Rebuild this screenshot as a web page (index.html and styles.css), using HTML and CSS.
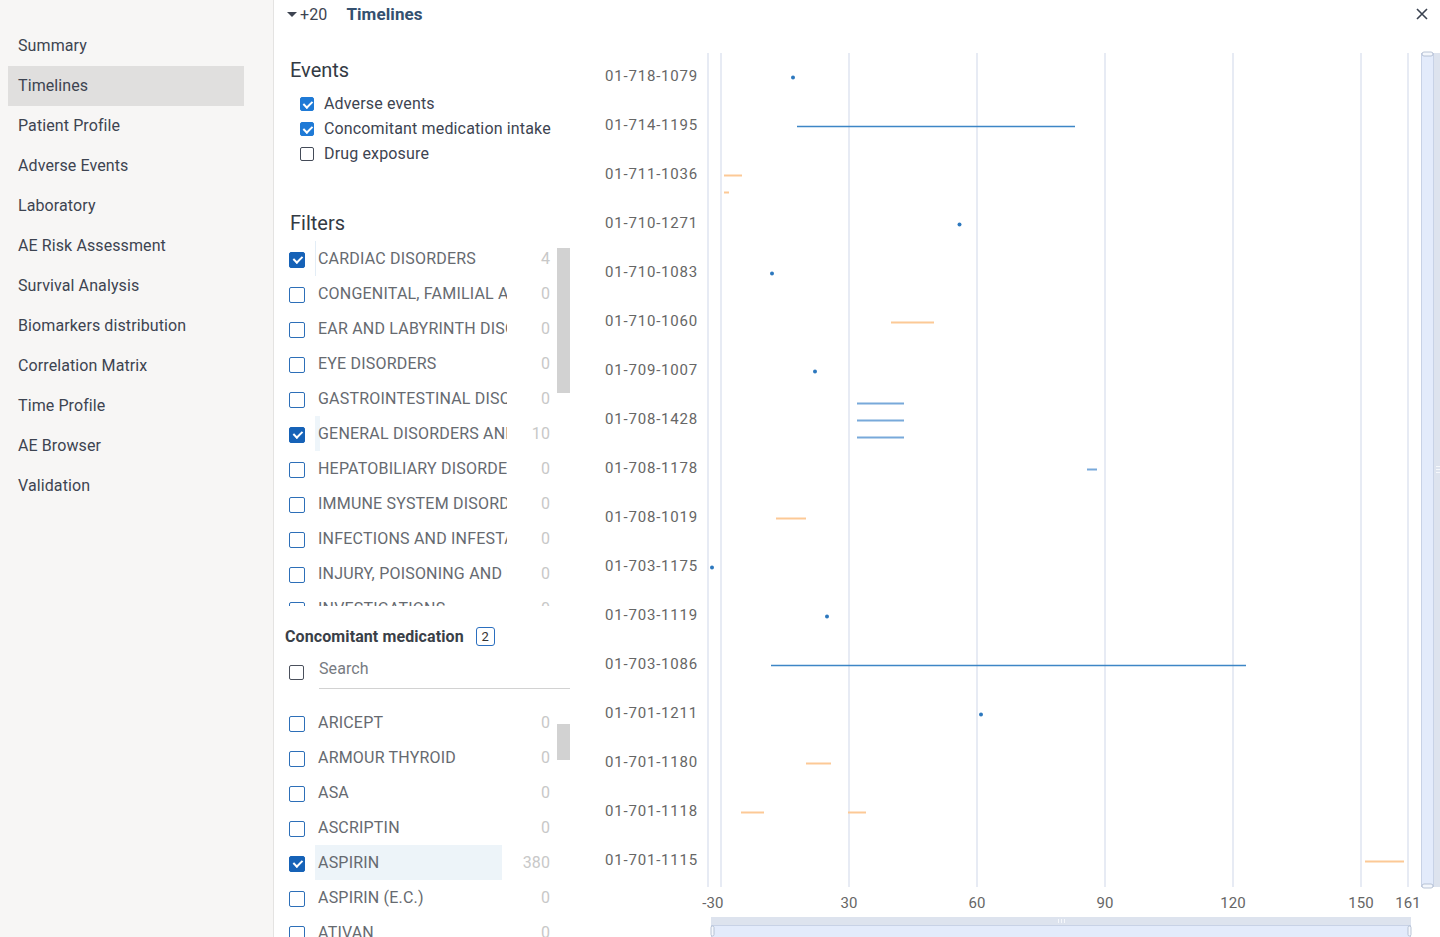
FILE: index.html
```html
<!DOCTYPE html>
<html lang="en">
<head>
<meta charset="utf-8">
<title>Timelines</title>
<link rel="stylesheet" href="styles.css">
</head>
<body>
<aside class="sidebar">
  <ul class="nav">
    <li class="nav-item">Summary</li>
    <li class="nav-item active">Timelines</li>
    <li class="nav-item">Patient Profile</li>
    <li class="nav-item">Adverse Events</li>
    <li class="nav-item">Laboratory</li>
    <li class="nav-item">AE Risk Assessment</li>
    <li class="nav-item">Survival Analysis</li>
    <li class="nav-item">Biomarkers distribution</li>
    <li class="nav-item">Correlation Matrix</li>
    <li class="nav-item">Time Profile</li>
    <li class="nav-item">AE Browser</li>
    <li class="nav-item">Validation</li>
  </ul>
</aside>
<main class="main">
  <header class="topbar">
    <span class="caret"></span>
    <span class="count">+20</span>
    <span class="title">Timelines</span>
    <svg class="close" width="12" height="12" viewBox="0 0 12 12"><path d="M1 1L11 11M11 1L1 11" stroke="#3a4250" stroke-width="1.6"/></svg>
  </header>
  <div class="body">
    <section class="panel">
      <h2 class="section-title events-title">Events</h2>
      <ul class="events">
        <li class="ev"><span class="cb cb-on"></span>Adverse events</li>
        <li class="ev"><span class="cb cb-on"></span>Concomitant medication intake</li>
        <li class="ev"><span class="cb"></span>Drug exposure</li>
      </ul>
      <h2 class="section-title filters-title">Filters</h2>
      <div class="list filter-list">
        <div class="row"><span class="box on"></span><span class="lbl mark">CARDIAC DISORDERS</span><span class="num">4</span></div>
        <div class="row"><span class="box"></span><span class="lbl">CONGENITAL, FAMILIAL AND GENETIC DISORDERS</span><span class="num">0</span></div>
        <div class="row"><span class="box"></span><span class="lbl">EAR AND LABYRINTH DISORDERS</span><span class="num">0</span></div>
        <div class="row"><span class="box"></span><span class="lbl">EYE DISORDERS</span><span class="num">0</span></div>
        <div class="row"><span class="box"></span><span class="lbl">GASTROINTESTINAL DISORDERS</span><span class="num">0</span></div>
        <div class="row"><span class="box on"></span><span class="lbl mark2">GENERAL DISORDERS AND ADMINISTRATION</span><span class="num">10</span></div>
        <div class="row"><span class="box"></span><span class="lbl">HEPATOBILIARY DISORDERS</span><span class="num">0</span></div>
        <div class="row"><span class="box"></span><span class="lbl">IMMUNE SYSTEM DISORDERS</span><span class="num">0</span></div>
        <div class="row"><span class="box"></span><span class="lbl">INFECTIONS AND INFESTATIONS</span><span class="num">0</span></div>
        <div class="row"><span class="box"></span><span class="lbl">INJURY, POISONING AND PROCEDURAL</span><span class="num">0</span></div>
        <div class="row"><span class="box"></span><span class="lbl">INVESTIGATIONS</span><span class="num">0</span></div>
        <span class="thumb thumb-filters"></span>
      </div>
      <div class="cm-head">
        <span class="cm-title">Concomitant medication</span>
        <span class="badge">2</span>
      </div>
      <div class="search-row">
        <span class="box gray"></span>
        <span class="search">Search</span>
      </div>
      <div class="list med-list">
        <div class="row"><span class="box"></span><span class="lbl">ARICEPT</span><span class="num">0</span></div>
        <div class="row"><span class="box"></span><span class="lbl">ARMOUR THYROID</span><span class="num">0</span></div>
        <div class="row"><span class="box"></span><span class="lbl">ASA</span><span class="num">0</span></div>
        <div class="row"><span class="box"></span><span class="lbl">ASCRIPTIN</span><span class="num">0</span></div>
        <div class="row"><span class="box on"></span><span class="lbl hl">ASPIRIN</span><span class="num">380</span></div>
        <div class="row"><span class="box"></span><span class="lbl">ASPIRIN (E.C.)</span><span class="num">0</span></div>
        <div class="row"><span class="box"></span><span class="lbl">ATIVAN</span><span class="num">0</span></div>
        <span class="thumb thumb-meds"></span>
      </div>
    </section>
    <section class="chart">
      <svg class="plot" width="850" height="909" viewBox="590 28 850 909">
        <g class="grid" stroke="#e7ebf4" stroke-width="2">
          <line x1="708" y1="53" x2="708" y2="887"/>
          <line x1="721" y1="53" x2="721" y2="887"/>
          <line x1="849" y1="53" x2="849" y2="887"/>
          <line x1="977" y1="53" x2="977" y2="887"/>
          <line x1="1105" y1="53" x2="1105" y2="887"/>
          <line x1="1233" y1="53" x2="1233" y2="887"/>
          <line x1="1361" y1="53" x2="1361" y2="887"/>
          <line x1="1408" y1="53" x2="1408" y2="887"/>
        </g>
        <g class="ylabels" font-family="Roboto, sans-serif" font-size="15" fill="#666" text-anchor="end" letter-spacing="0.8">
          <text x="698" y="81">01-718-1079</text>
          <text x="698" y="130">01-714-1195</text>
          <text x="698" y="179">01-711-1036</text>
          <text x="698" y="228">01-710-1271</text>
          <text x="698" y="277">01-710-1083</text>
          <text x="698" y="326">01-710-1060</text>
          <text x="698" y="375">01-709-1007</text>
          <text x="698" y="424">01-708-1428</text>
          <text x="698" y="473">01-708-1178</text>
          <text x="698" y="522">01-708-1019</text>
          <text x="698" y="571">01-703-1175</text>
          <text x="698" y="620">01-703-1119</text>
          <text x="698" y="669">01-703-1086</text>
          <text x="698" y="718">01-701-1211</text>
          <text x="698" y="767">01-701-1180</text>
          <text x="698" y="816">01-701-1118</text>
          <text x="698" y="865">01-701-1115</text>
        </g>
        <g class="xlabels" font-family="Roboto, sans-serif" font-size="15" fill="#666" text-anchor="middle">
          <text x="713" y="908">-30</text>
          <text x="849" y="908">30</text>
          <text x="977" y="908">60</text>
          <text x="1105" y="908">90</text>
          <text x="1233" y="908">120</text>
          <text x="1361" y="908">150</text>
          <text x="1408" y="908">161</text>
        </g>
        <g class="blue" stroke="#3d86c6" stroke-width="1.6">
          <line x1="797" y1="126.5" x2="1075" y2="126.5"/>
          <line x1="771" y1="665.5" x2="1246" y2="665.5"/>
        </g>
        <g stroke="#78a9da" stroke-width="2">
          <line x1="857" y1="403.5" x2="904" y2="403.5"/>
          <line x1="857" y1="420.5" x2="904" y2="420.5"/>
          <line x1="857" y1="437.5" x2="904" y2="437.5"/>
          <line x1="1087" y1="469.5" x2="1097" y2="469.5"/>
        </g>
        <g fill="#2d78be">
          <circle cx="793" cy="77.5" r="2"/>
          <circle cx="959.5" cy="224.5" r="2"/>
          <circle cx="772" cy="273.5" r="2"/>
          <circle cx="815" cy="371.5" r="2"/>
          <circle cx="712" cy="567.5" r="2"/>
          <circle cx="827" cy="616.5" r="2"/>
          <circle cx="981" cy="714.5" r="2"/>
        </g>
        <g stroke="#fcc996" stroke-width="2">
          <line x1="724" y1="175.5" x2="742" y2="175.5"/>
          <line x1="724" y1="192.5" x2="729" y2="192.5"/>
          <line x1="891" y1="322.5" x2="934" y2="322.5"/>
          <line x1="776" y1="518.5" x2="806" y2="518.5"/>
          <line x1="806" y1="763.5" x2="831" y2="763.5"/>
          <line x1="741" y1="812.5" x2="764" y2="812.5"/>
          <line x1="848" y1="812.5" x2="866" y2="812.5"/>
          <line x1="1365" y1="861.5" x2="1404" y2="861.5"/>
        </g>
        <g class="vzoom">
          <rect x="1421.5" y="53.5" width="12" height="833" fill="#e3ebfb" stroke="#c8d2e6"/>
          <rect x="1434" y="53" width="6" height="834" fill="#dde3ee"/>
          <rect x="1422" y="52" width="11" height="4" rx="2" fill="#f4f7fc" stroke="#aab6cc" stroke-width="0.8"/>
          <rect x="1422" y="884" width="11" height="4" rx="2" fill="#f4f7fc" stroke="#aab6cc" stroke-width="0.8"/>
          <g stroke="#f5f7fb" stroke-width="1"><line x1="1436" y1="466.5" x2="1440" y2="466.5"/><line x1="1436" y1="469.5" x2="1440" y2="469.5"/><line x1="1436" y1="472.5" x2="1440" y2="472.5"/></g>
        </g>
        <g class="hzoom">
          <rect x="711" y="917" width="700" height="8" fill="#dde3ee"/>
          <rect x="711.5" y="925.5" width="699" height="12" fill="#e3ebfb" stroke="#c8d2e6"/>
          <rect x="711" y="926" width="3" height="10" rx="1.5" fill="#f4f7fc" stroke="#aab6cc" stroke-width="0.8"/>
          <rect x="1408" y="926" width="3" height="10" rx="1.5" fill="#f4f7fc" stroke="#aab6cc" stroke-width="0.8"/>
          <g stroke="#f5f7fb" stroke-width="1"><line x1="1058.5" y1="919" x2="1058.5" y2="923"/><line x1="1061.5" y1="919" x2="1061.5" y2="923"/><line x1="1064.5" y1="919" x2="1064.5" y2="923"/></g>
        </g>
      </svg>
    </section>
  </div>
</main>
</body>
</html>
```
FILE: styles.css
```css
* { box-sizing: border-box; }
html, body { margin: 0; padding: 0; }
body {
  display: flex;
  width: 1440px;
  height: 937px;
  overflow: hidden;
  font-family: Roboto, "Noto Sans", sans-serif;
  background: #fff;
  color: #3d4451;
  letter-spacing: 0.1px;
}
.sidebar {
  width: 274px;
  flex: none;
  background: #f7f6f5;
  border-right: 1px solid #e4e3e2;
}
.nav {
  list-style: none;
  margin: 0;
  padding: 26px 0 0 8px;
}
.nav-item {
  width: 236px;
  height: 40px;
  line-height: 40px;
  padding-left: 10px;
  font-size: 16px;
  color: #3d4451;
}
.nav-item.active { background: #e0dfde; }

.main {
  flex: 1;
  display: flex;
  flex-direction: column;
  min-width: 0;
}
.topbar {
  height: 28px;
  flex: none;
  display: flex;
  align-items: center;
  padding-left: 13px;
  padding-right: 12px;
}
.caret {
  width: 0; height: 0;
  border-left: 5px solid transparent;
  border-right: 5px solid transparent;
  border-top: 5px solid #3d4451;
  margin-right: 3px;
  margin-top: 1px;
}
.count { font-size: 16px; color: #3d4451; }
.title {
  margin-left: 19px;
  font-size: 17px;
  font-weight: 700;
  color: #34506f;
}
.close { margin-left: auto; }

.body { flex: 1; display: flex; min-height: 0; }
.panel {
  width: 316px;
  flex: none;
  padding-left: 11px;
  overflow: hidden;
}
.section-title {
  margin: 0;
  font-size: 20px;
  font-weight: 400;
  line-height: 24px;
  color: #333a44;
  padding-left: 5px;
  letter-spacing: 0;
}
.events-title { margin-top: 30px; }
.events {
  list-style: none;
  margin: 9px 0 0;
  padding: 0 0 0 15px;
}
.ev {
  height: 25px;
  display: flex;
  align-items: center;
  font-size: 16px;
  color: #3d4451;
  letter-spacing: 0.15px;
}
.cb {
  width: 14px; height: 14px;
  border: 1.5px solid #444b58;
  border-radius: 2px;
  margin-right: 10px;
  background: #fff;
  position: relative;
}
.cb-on { background: #1f7ad6; border-color: #1f7ad6; }
.cb-on::after, .box.on::after {
  content: "";
  position: absolute;
  left: 3.5px; top: 1px;
  width: 3.5px; height: 7px;
  border: solid #fff;
  border-width: 0 2px 2px 0;
  transform: rotate(45deg);
}
.filters-title { margin-top: 45px; }

.list {
  position: relative;
  width: 285px;
  overflow: hidden;
  padding-left: 4px;
}
.filter-list { height: 365px; margin-top: 6px; }
.row {
  height: 35px;
  display: flex;
  align-items: center;
}
.box {
  width: 16px; height: 16px;
  flex: none;
  border: 1.5px solid #2d6fb8;
  border-radius: 2px;
  position: relative;
  background: #fff;
  margin-top: 2px;
}
.box.on { background: #1662b7; border-color: #1662b7; }
.box.on::after { left: 4.5px; top: 1.5px; }
.box.gray { border-color: #4a505c; width: 15px; height: 15px; }
.lbl {
  width: 192px;
  margin-left: 10px;
  padding-left: 3px;
  height: 35px;
  line-height: 35px;
  white-space: nowrap;
  overflow: hidden;
  text-overflow: clip;
  font-size: 16px;
  color: #666a70;
  letter-spacing: 0.2px;
}
.lbl.mark { box-shadow: inset 1px 0 0 #e3edf6; }
.lbl.mark2 { box-shadow: inset 5px 0 0 #eef5fa; }
.lbl.hl { background: #edf4f9; width: 187px; margin-right: 5px; }
.num {
  width: 43px;
  text-align: right;
  font-size: 16px;
  color: #c8c8c8;
}
.thumb {
  position: absolute;
  left: 272px;
  width: 13px;
  background: #d2d2d2;
}
.thumb-filters { top: 7px; height: 145px; }
.thumb-meds { top: 19px; height: 36px; }

.cm-head {
  margin-top: 20px;
  display: flex;
  align-items: center;
  height: 20px;
}
.cm-title {
  font-size: 16px;
  font-weight: 700;
  color: #3a3f48;
}
.badge {
  margin-left: 12px;
  width: 19px; height: 19px;
  border: 1px solid #2b6fbf;
  border-radius: 3px;
  font-size: 13px;
  line-height: 17px;
  text-align: center;
  color: #333;
}
.search-row {
  margin-top: 8px;
  height: 35px;
  display: flex;
  align-items: center;
  padding-left: 4px;
  width: 285px;
}
.search {
  margin-left: 15px;
  flex: 1;
  height: 35px;
  line-height: 29px;
  font-size: 16px;
  color: #777b82;
  border-bottom: 1px solid #d2d2d2;
}
.med-list { margin-top: 16px; height: 240px; }

.chart { flex: 1; min-width: 0; position: relative; }
.plot { display: block; }
```
